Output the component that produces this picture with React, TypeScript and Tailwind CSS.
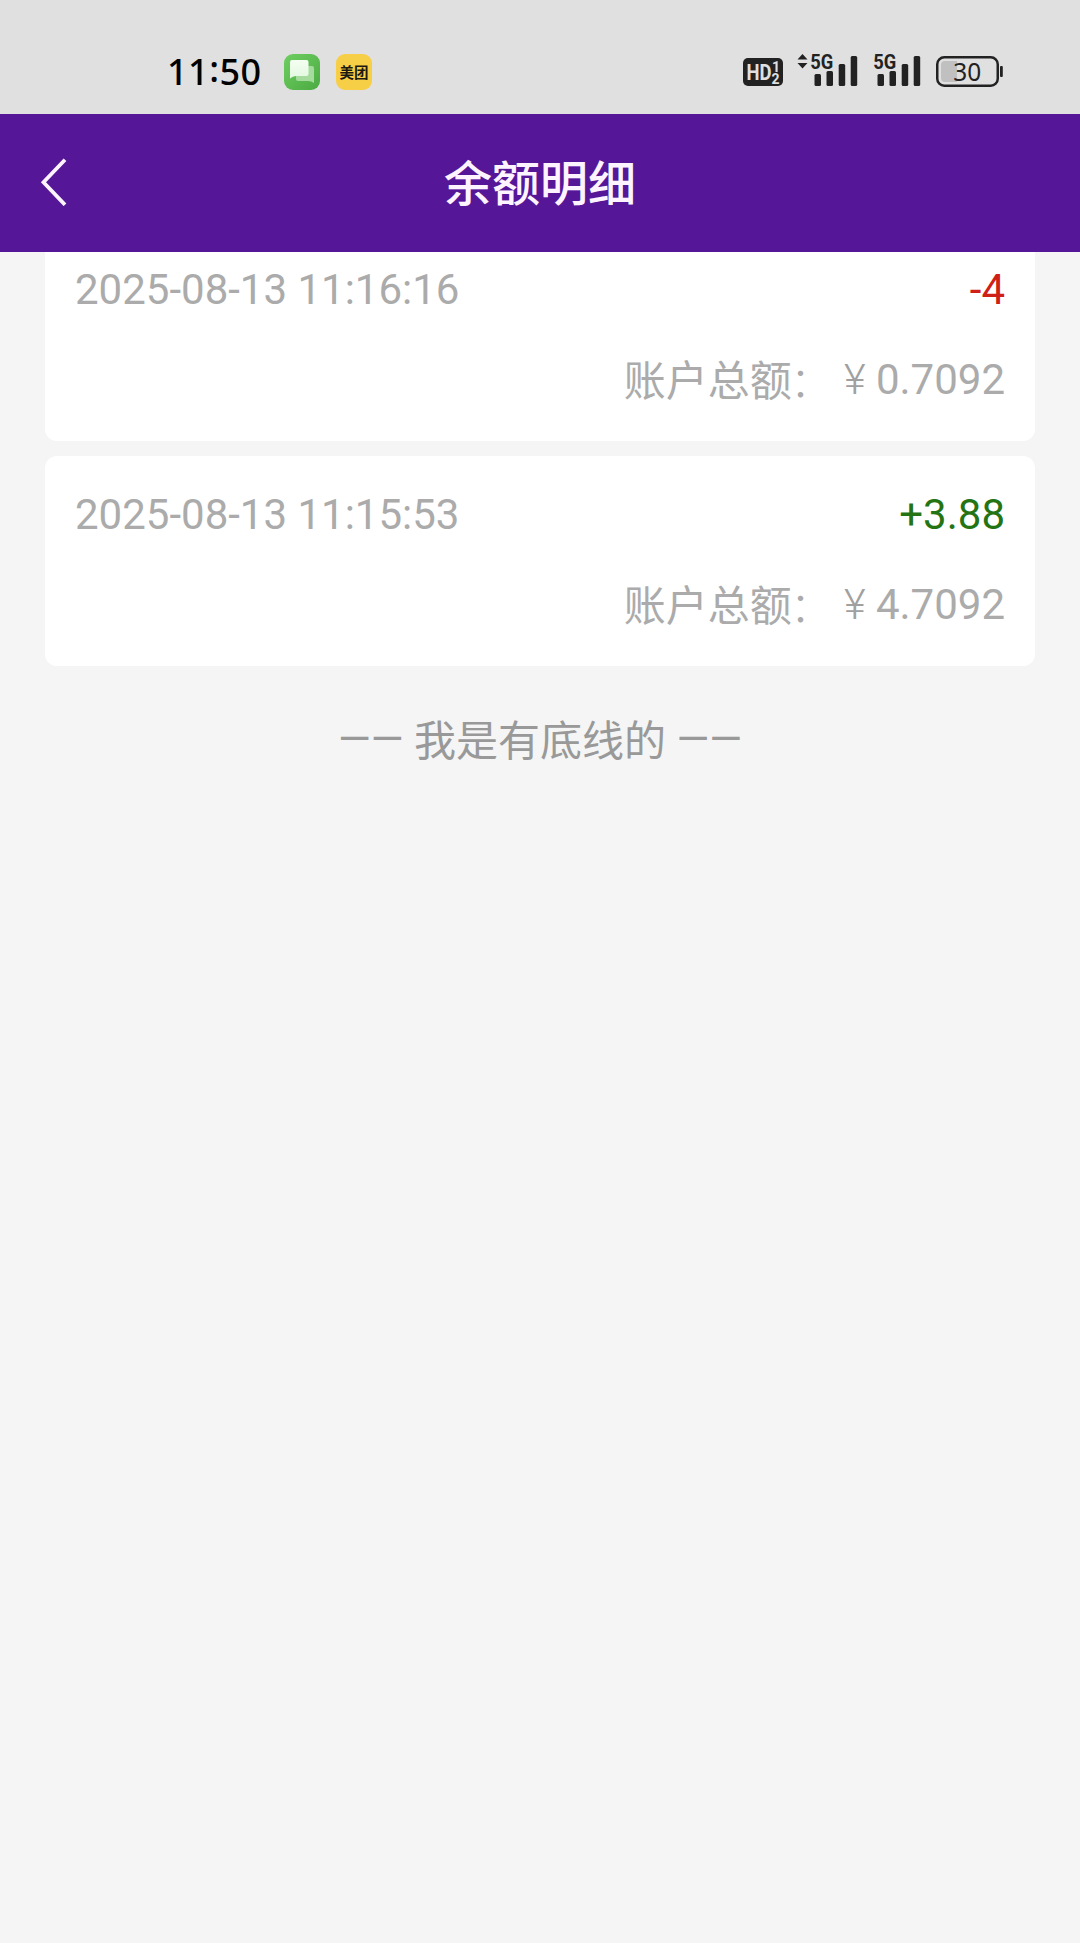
type Entry = { time: string; amount: string; total: string; tone: string };

const entries: Entry[] = [
  { time: "2025-08-13 11:16:16", amount: "-4", total: "0.7092", tone: "text-[#cf2018]" },
  { time: "2025-08-13 11:15:53", amount: "+3.88", total: "4.7092", tone: "text-[#257414]" },
];

function MessageIcon() {
  return (
    <svg width="36" height="36" viewBox="0 0 36 36">
      <defs>
        <linearGradient id="msg" x1="0" y1="0" x2="1" y2="1">
          <stop offset="0" stopColor="#6fce60" />
          <stop offset="1" stopColor="#4bab43" />
        </linearGradient>
        <linearGradient id="bubble" x1="0" y1="0" x2="0" y2="1">
          <stop offset="0" stopColor="#f4fff2" />
          <stop offset="1" stopColor="#e3f8df" />
        </linearGradient>
      </defs>
      <rect width="36" height="36" rx="9" fill="url(#msg)" />
      <path d="M14 12H28Q30 12 30 14V29Q27.500 27 24 27H14Q12 27 12 25V14Q12 12 14 12Z" fill="#a5dc9d" />
      <path d="M8 6H22.500Q24.500 6 24.500 8V20Q24.500 22 22.500 22H12Q8.500 22 6 24.500V8Q6 6 8 6Z" fill="url(#bubble)" />
    </svg>
  );
}

function Signal({ arrows = false }: { arrows?: boolean }) {
  return (
    <svg className="overflow-visible" width="61" height="36" viewBox="0 0 61 36" fill="#222">
      {arrows && <path d="M0.500 7.500L5.500 2L10.500 7.500ZM0.500 11H10.500L5.500 16.500Z" />}
      <text x="13.300" y="16.700" fontFamily="Roboto, sans-serif" fontWeight="700" fontSize="21" textLength="23" lengthAdjust="spacingAndGlyphs">5G</text>
      <rect x="17.500" y="22" width="6.500" height="12" rx="1.500" />
      <rect x="29.500" y="19" width="6.500" height="15" rx="1.500" />
      <rect x="41.700" y="12" width="6.500" height="22" rx="1.500" />
      <rect x="53.700" y="4" width="6.500" height="30" rx="1.500" />
    </svg>
  );
}

function Battery() {
  return (
    <svg width="67" height="32" viewBox="0 0 67 32">
      <rect x="1.250" y="1.250" width="60.500" height="28.500" rx="7" fill="none" stroke="#222" strokeWidth="2.500" />
      <path d="M9 5H21V26H9Q5 26 5 22V9Q5 5 9 5Z" fill="#c0c0c0" />
      <rect x="64" y="10" width="2.800" height="11" rx="1" fill="#222" />
      <text x="31.300" y="25" textAnchor="middle" fontFamily="'Noto Sans', sans-serif" fontSize="25.500" textLength="28" lengthAdjust="spacingAndGlyphs" fill="#222">30</text>
    </svg>
  );
}

function StatusBar() {
  return (
    <div className="flex h-[114px] items-start justify-between bg-[#e0e0e0] pl-[167px] pr-[77px] pt-[54px]">
      <div className="flex h-9 items-center">
        <span className="w-[117px] font-['Noto_Sans',sans-serif] text-[36px] font-medium leading-9 tracking-[0.5px] text-black">
          11<span className="relative -top-[3px]">:</span>50
        </span>
        <MessageIcon />
        <div className="ml-4 flex size-9 items-center justify-center rounded-[9px] bg-[#f7cf46] pb-px font-['Noto_Sans_CJK_SC',sans-serif] text-[14.500px] font-bold leading-[34px] text-[#1c1a10]">
          美团
        </div>
      </div>
      <div className="flex h-9 items-start">
        <svg className="mt-1 overflow-visible" width="40" height="28" viewBox="0 0 40 28">
          <rect width="40" height="28" rx="5" fill="#222" />
          <g fill="#e0e0e0" fontFamily="Roboto, sans-serif" fontWeight="700">
            <text x="3.500" y="22" fontSize="22" textLength="25" lengthAdjust="spacingAndGlyphs">HD</text>
            <text x="29" y="13.500" fontSize="14">1</text>
            <text x="28.500" y="25.500" fontSize="14">2</text>
          </g>
        </svg>
        <div className="-mt-0.5 ml-[14px] flex gap-0.5">
          <Signal arrows />
          <Signal />
        </div>
        <div className="ml-[15px] mt-0.5"><Battery /></div>
      </div>
    </div>
  );
}

function Card({ entry }: { entry: Entry }) {
  return (
    <article className="h-[210px] rounded-xl bg-white px-[30px] pt-[29px] text-[42px] leading-[60px] text-[#ababab]">
      <div className="flex justify-between">
        <time>{entry.time}</time>
        <span className={entry.tone}>{entry.amount}</span>
      </div>
      <p className="mt-[30px] flex justify-end">
        <span className="pt-0.5">账户总额</span>
        <span className="-ml-0.5 mr-0.5 pt-[3px] font-light">：</span>
        <span className="w-[42px] text-center font-light text-[#a0a0a0]">¥</span>
        <span>{entry.total}</span>
      </p>
    </article>
  );
}

export default function App() {
  return (
    <div className="flex h-[1943px] w-[1080px] flex-col overflow-hidden bg-[#f5f5f5] font-[Roboto,'Noto_Sans_CJK_SC',sans-serif]" lang="zh-CN">
      <StatusBar />
      <header className="grid h-[138px] shrink-0 grid-cols-[1fr_auto_1fr] items-center bg-[#551698] text-[#fdf4ff]">
        <svg className="mb-0.5 ml-[40px]" width="27" height="48" viewBox="0 0 27 48" fill="none" stroke="currentColor" strokeWidth="3.800">
          <path d="M25 1.800L3.500 24.300L25 46.800" />
        </svg>
        <h1 className="pt-[3px] text-[48px] font-medium leading-[60px]">余额明细</h1>
      </header>
      <main className="flex-1 overflow-hidden px-[45px]">
        <div className="-mt-[21px] flex flex-col gap-[15px]">
          {entries.map((entry) => (
            <Card key={entry.time} entry={entry} />
          ))}
        </div>
        <p className="mt-[44px] flex justify-center gap-[10.400px] text-[42px] leading-[60px] text-[#999]">
          <span>——</span>
          <span className="pt-0.5">我是有底线的</span>
          <span>——</span>
        </p>
      </main>
    </div>
  );
}
